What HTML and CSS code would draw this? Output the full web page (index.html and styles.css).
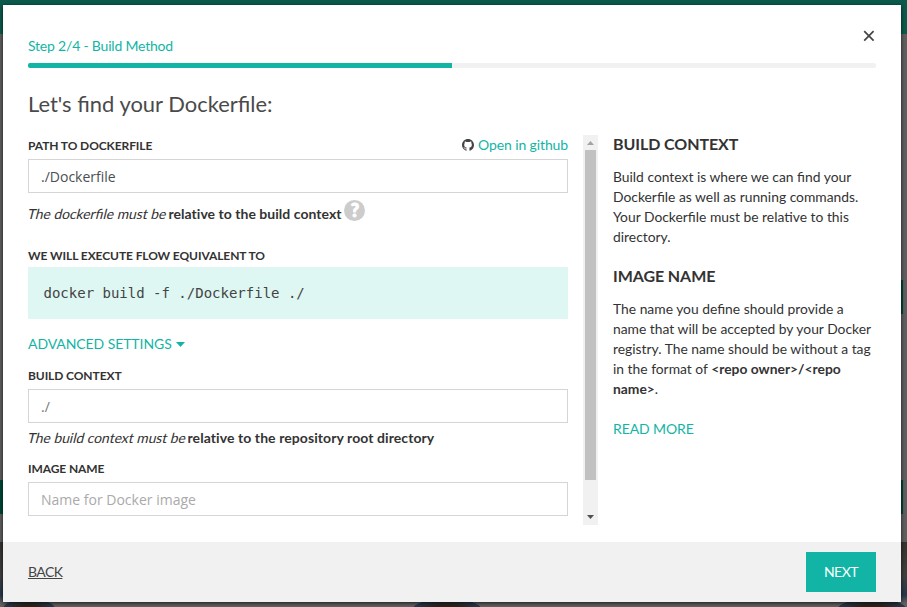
FILE: index.html
```html
<!DOCTYPE html>
<html lang="en">
<head>
<meta charset="utf-8">
<title>Build Method</title>
<link rel="stylesheet" href="styles.css">
</head>
<body>
<div class="backdrop">
  <div class="modal">
    <header class="head">
      <div class="step">Step 2/4 - Build Method</div>
      <button class="close" aria-label="Close"><svg width="12" height="12" viewBox="0 0 12 12"><path d="M1.200 1.200l9.400 9.400M10.600 1.200l-9.400 9.400" stroke="#444" stroke-width="1.7"/></svg></button>
      <div class="progress"><div class="progress-fill"></div></div>
    </header>
    <h1 class="title">Let's find your Dockerfile:</h1>
    <div class="content">
      <form class="form">
        <div class="label-row">
          <label class="label">PATH TO DOCKERFILE</label>
          <a class="github"><svg class="mark" width="12" height="12" viewBox="0 0 16 16"><path fill="#444" d="M8 0C3.580 0 0 3.580 0 8c0 3.540 2.290 6.530 5.470 7.590.4.070.55-.17.55-.38 0-.19-.01-.82-.01-1.490-2.010.37-2.530-.49-2.690-.94-.09-.23-.48-.94-.82-1.130-.28-.15-.68-.52-.01-.53.63-.01 1.080.58 1.230.82.72 1.210 1.870.87 2.330.66.070-.52.28-.87.51-1.070-1.780-.2-3.640-.89-3.640-3.950 0-.87.31-1.590.82-2.150-.08-.2-.36-1.020.08-2.120 0 0 .67-.21 2.200.82a7.600 7.600 0 0 1 4 0c1.530-1.040 2.200-.82 2.200-.82.44 1.100.16 1.920.08 2.120.51.56.82 1.270.82 2.150 0 3.070-1.870 3.750-3.650 3.950.29.25.54.73.54 1.480 0 1.070-.01 1.930-.01 2.200 0 .21.15.46.55.38A8 8 0 0 0 16 8c0-4.420-3.580-8-8-8z"/></svg><span>Open in github</span></a>
        </div>
        <input class="field" value="./Dockerfile">
        <div class="hint hint-help"><em>The dockerfile must be</em> <b>relative to the build context</b><span class="help">?</span></div>
        <label class="label label-flow">WE WILL EXECUTE FLOW EQUIVALENT TO</label>
        <pre class="command">docker build -f ./Dockerfile ./</pre>
        <a class="advanced">ADVANCED SETTINGS<svg width="9" height="5" viewBox="0 0 9 5"><path fill="#12b5a5" d="M0 0h9L4.500 5z"/></svg></a>
        <label class="label">BUILD CONTEXT</label>
        <input class="field context" placeholder="./">
        <div class="hint"><em>The build context must be</em> <b>relative to the repository root directory</b></div>
        <label class="label">IMAGE NAME</label>
        <input class="field" placeholder="Name for Docker image">
      </form>
      <div class="scrollbar">
        <svg width="15" height="15" viewBox="0 0 15 15"><path fill="#a3a3a3" d="M4 10l3.500-4 3.500 4z"/></svg>
        <div class="thumb"></div>
        <svg width="15" height="15" viewBox="0 0 15 15"><path fill="#505050" d="M4 5h7L7.500 9z"/></svg>
      </div>
      <aside class="info">
        <h2>BUILD CONTEXT</h2>
        <p>Build context is where we can find your Dockerfile as well as running commands. Your Dockerfile must be relative to this directory.</p>
        <h2>IMAGE NAME</h2>
        <p>The name you define should provide a name that will be accepted by your Docker registry. The name should be without a tag in the format of <b>&lt;repo owner&gt;/&lt;repo name&gt;</b>.</p>
        <a class="more">READ MORE</a>
      </aside>
    </div>
    <footer class="foot">
      <a class="back">BACK</a>
      <button class="next">NEXT</button>
    </footer>
  </div>
</div>
</body>
</html>
```
FILE: styles.css
```css
* { box-sizing: border-box; }
body { margin: 0; font: 14px/20px Lato, sans-serif; color: #333; }
h1, h2, p, pre { margin: 0; font-weight: 400; }
button { border: 0; padding: 0; background: none; font: inherit; }

.backdrop {
  width: 907px;
  height: 607px;
  padding: 5px 6px 5px 3px;
  overflow: hidden;
  background:
    linear-gradient(#004638, #004638) 0 480px / 3px 34px no-repeat,
    linear-gradient(#004638, #004638) 901px 280px / 2px 34px no-repeat,
    linear-gradient(#004638, #004638) 901px 480px / 2px 34px no-repeat,
    radial-gradient(ellipse at center, #2b241b 30%, #263a50 70%, transparent 72%) 3px 599px / 52px 20px no-repeat,
    radial-gradient(ellipse at center, #2b241b 30%, #263a50 70%, transparent 72%) 413px 599px / 68px 20px no-repeat,
    radial-gradient(ellipse at center, #2b241b 30%, #263a50 70%, transparent 72%) 838px 599px / 68px 20px no-repeat,
    linear-gradient(#0b5b4d, #0b5b4d) 0 0 / 100% 34px no-repeat,
    linear-gradient(transparent 542px, #36332f 542px, #414141 575px, #26384c 595px, transparent 603px) 901px 0 / 6px 100% no-repeat,
    linear-gradient(transparent 542px, #36332f 542px, #414141 575px, #26384c 595px, transparent 603px) 0 0 / 3px 100% no-repeat,
    #606060;
}
.modal {
  display: flex;
  flex-direction: column;
  height: 597px;
  background: #fff;
  box-shadow: 0 1px 4px rgba(0, 0, 0, .75);
}

.head {
  display: grid;
  grid-template-columns: 1fr auto;
  margin: 0 25px;
  padding-top: 25px;
}
.step { padding-top: 6px; height: 33px; color: #12b5a5; letter-spacing: -.2px; }
.close { height: 12px; margin-right: 1px; line-height: 0; }
.progress {
  grid-column: 1 / 3;
  height: 5px;
  border-radius: 2px;
  background: #f1f1f1;
  overflow: hidden;
}
.progress-fill { width: 50%; height: 5px; background: #12b5a5; }

.title { margin: 21px 25px 0; font-size: 21.950px; line-height: 30px; color: #4a4a4a; }
.content { display: flex; flex: 1; margin: 16px 25px 0; }
.form { display: flex; flex-direction: column; width: 540px; height: 390px; }
.label-row { display: flex; justify-content: space-between; height: 24px; }
.label { height: 24px; font-size: 12px; font-weight: 700; line-height: 22px; letter-spacing: -.09px; }
.github { display: flex; align-items: center; gap: 4px; height: 20px; color: #12b5a5; letter-spacing: -.12px; }
.field {
  width: 100%;
  height: 34px;
  padding: 0 12px;
  border: 1px solid #d5d5d5;
  background: #fff;
  font: 14px "Open Sans", sans-serif;
  color: #4a4f52;
}
.field::placeholder { color: #aaa; opacity: 1; }
.context::placeholder { color: #777; }
.hint { display: flex; height: 35px; padding-top: 5px; white-space: nowrap; }
.hint em { width: 159.500px; height: 20px; font-size: 13.850px; font-style: normal; transform: skewX(-14deg); }
.hint b { letter-spacing: .08px; }
.hint-help { height: 52px; padding-top: 11px; }
.hint-help em { width: 140.500px; }
.hint-help b { letter-spacing: .03px; }
.help {
  width: 21px;
  height: 21px;
  margin: -4px 0 0 3px;
  border-radius: 50%;
  background: #ccc;
  color: #fff;
  font: 900 18px/21px Lato, sans-serif;
  -webkit-text-stroke: 1px #fff;
  text-align: center;
}
.label-flow { height: 22px; }
.command {
  height: 52px;
  padding-left: 15.500px;
  background: #def7f3;
  font: 14px/52px "DejaVu Sans Mono", monospace;
  color: #444;
}
.advanced { display: flex; align-items: center; gap: 4px; height: 20px; margin: 15px 0 11px; color: #12b5a5; letter-spacing: -.08px; }

.scrollbar {
  display: flex;
  flex-direction: column;
  width: 15px;
  height: 390px;
  margin-left: 15px;
  background: #f1f1f1;
}
.thumb { height: 330px; margin: 0 2px 30px; background: #c1c1c1; }

.info { width: 263px; margin-left: 15px; }
.info h2 { margin-bottom: 14px; font-size: 16px; font-weight: 700; line-height: 18px; letter-spacing: -.08px; }
.info p { margin-bottom: 20px; font-size: 13.850px; }
.more { color: #12b5a5; letter-spacing: -.1px; }

.foot {
  display: flex;
  align-items: center;
  justify-content: space-between;
  height: 60px;
  padding: 0 25px;
  background: #f1f1f1;
}
.back { color: #444; text-decoration: underline; letter-spacing: -.6px; }
.next { width: 70px; height: 40px; background: #12b5a5; color: #fff; letter-spacing: -.5px; }
```
